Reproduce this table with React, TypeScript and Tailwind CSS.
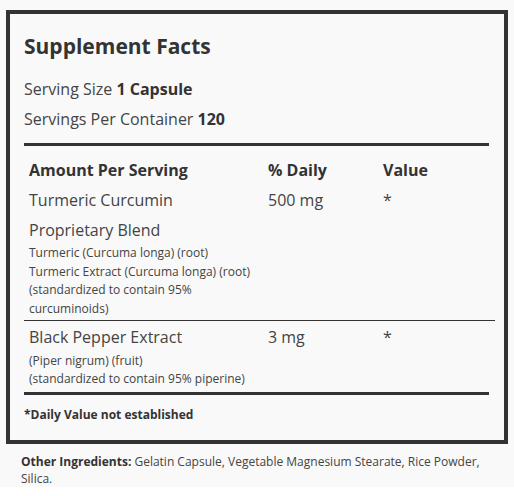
const rows = [
  {
    name: "Turmeric Curcumin",
    amount: "500 mg",
    dv: "*",
  },
];

export default function App() {
  return (
    <div className="w-[514px] bg-[#f9f9f9] pt-[10px] font-['Open_Sans',sans-serif] text-[#444]">
      <div className="mx-[6px] border-4 border-[#333] pl-[14px] pr-[9px] pt-[18px] pb-[16px]">
        <h2 className="text-[21px] font-bold leading-[28px] text-[#333]">Supplement Facts</h2>
        <p className="mt-[17px] text-[16px] leading-[24px]">
          Serving Size <b className="font-bold text-[#333]">1 Capsule</b>
        </p>
        <p className="mt-[6px] text-[16px] leading-[24px]">
          Servings Per Container <b className="font-bold text-[#333]">120</b>
        </p>

        <div className="mt-[12px] mr-[6px] h-[3px] bg-[#333]" />

        {/* header */}
        <div className="grid grid-cols-[239px_115px_1fr] pt-[12px] text-[16px] font-bold leading-[24px] text-[#333]">
          <div className="pl-[5px]">Amount Per Serving</div>
          <div className="pl-[5px]">% Daily</div>
          <div className="pl-[5px]">Value</div>
        </div>

        {rows.map((r) => (
          <div key={r.name} className="mt-[6px] grid grid-cols-[239px_115px_1fr] text-[16px] leading-[24px]">
            <div className="pl-[5px]">{r.name}</div>
            <div className="pl-[5px]">{r.amount}</div>
            <div className="pl-[5px]">{r.dv}</div>
          </div>
        ))}

        <div className="mt-[6px] pb-[2px] pl-[5px]">
          <div className="text-[16px] leading-[24px]">Proprietary Blend</div>
          <div className="mt-[2px] w-[232px] text-[12px] leading-[18.5px]">
            Turmeric (Curcuma longa) (root)
            <br />
            Turmeric Extract (Curcuma longa) (root)
            <br />
            (standardized to contain 95% curcuminoids)
          </div>
        </div>

        <div className="border-t border-[#333] pt-[4px] pb-[4px]">
          <div className="grid grid-cols-[239px_115px_1fr] text-[16px] leading-[24px]">
            <div className="pl-[5px]">Black Pepper Extract</div>
            <div className="pl-[5px]">3 mg</div>
            <div className="pl-[5px]">*</div>
          </div>
          <div className="mt-[3px] pl-[5px] text-[12px] leading-[18px]">
            (Piper nigrum) (fruit)
            <br />
            (standardized to contain 95% piperine)
          </div>
        </div>

        <div className="mr-[6px] h-[3px] bg-[#333]" />

        <p className="mt-[11px] text-[12px] font-bold leading-[18px] text-[#333]">*Daily Value not established</p>
      </div>

      <p className="mt-[9px] pl-[21px] pr-[26px] text-[12px] leading-[17px] text-[#444]">
        <b className="font-bold text-[#333]">Other Ingredients:</b> Gelatin Capsule, Vegetable Magnesium Stearate, Rice
        Powder, Silica.
      </p>
    </div>
  );
}
